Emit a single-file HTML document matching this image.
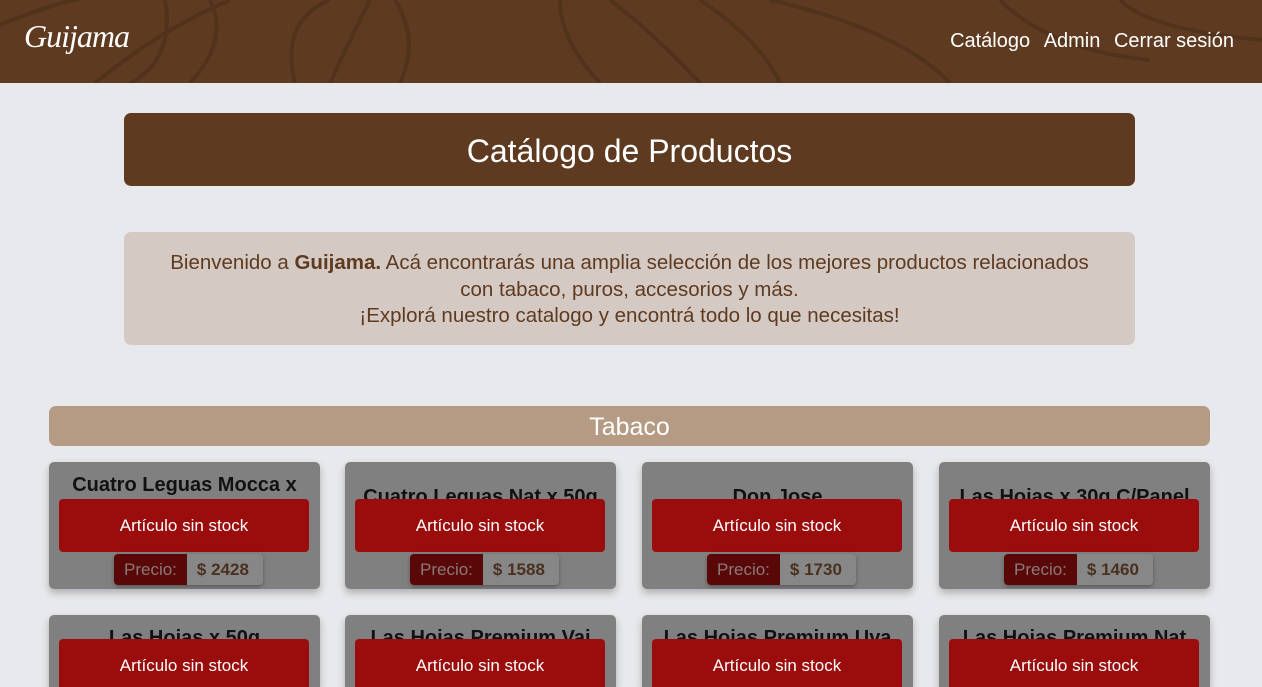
<!DOCTYPE html>
<html><head><meta charset="utf-8"><style>
*{margin:0;padding:0;box-sizing:border-box}
html,body{width:1262px;height:687px;overflow:hidden}
body{background:#e8e9ec;font-family:"Liberation Sans",sans-serif;position:relative}
.nav{position:absolute;left:0;top:0;width:1262px;height:83px;background:#5e3b20;overflow:hidden}
.logo{position:absolute;left:24px;top:18px;color:#fff;font-family:"Liberation Serif",serif;font-style:italic;font-size:32px;letter-spacing:-1px}
.links{position:absolute;right:28px;top:30px;color:#fff;font-size:20px}
.links span{margin-left:8px}
.title{position:absolute;left:124px;top:113px;width:1011px;height:73px;background:#5e3b20;border-radius:7px;color:#fff;font-size:32px;text-align:center;line-height:76px}
.welcome{position:absolute;left:124px;top:232px;width:1011px;height:113px;background:#d5c9c3;border-radius:7px;color:#5e3b20;font-size:20.5px;text-align:center;padding-top:18px;line-height:26.5px}
.cat{position:absolute;left:49px;top:406px;width:1161px;height:40px;background:#b59a84;border-radius:7px;color:#fff;font-size:25px;text-align:center;line-height:42px}
.card{position:absolute;width:271px;height:127px;background:#808080;border-radius:5px;box-shadow:0 4px 8px rgba(0,0,0,.25);overflow:hidden}
.card h3{font-size:20px;font-weight:bold;color:#111;text-align:center;margin-top:12px;white-space:nowrap}
.btn{position:absolute;left:10px;top:37px;width:250px;height:53px;background:#9b0c0c;border-radius:4px;color:#fff;font-size:17px;text-align:center;line-height:53px}
.price{position:absolute;top:92px;left:65px;height:31px;display:flex;font-size:17px;line-height:31px;border-radius:4px;overflow:hidden;box-shadow:0 2px 4px rgba(0,0,0,.3)}
.price a{background:#5a0707;color:#8a7a7a;padding:0 10px}
.price b{background:#878787;color:#4a3020;padding:0 14px 0 10px}
.r2{height:72px;border-radius:5px 5px 0 0}
</style></head><body>
<div class="nav">
<svg width="1262" height="83" style="position:absolute;left:0;top:0" fill="none" stroke="#51321b" stroke-width="4">
<path d="M0 25 Q60 0 100 -5"/><path d="M95 83 Q160 30 230 0"/><path d="M165 0 Q175 60 130 83"/><path d="M210 0 Q230 40 190 83"/><path d="M330 0 Q280 20 295 83"/><path d="M395 0 Q420 40 400 83"/><path d="M330 83 Q350 40 370 0"/><path d="M560 0 Q560 40 600 83"/><path d="M610 0 Q650 30 700 83"/><path d="M700 0 Q760 40 780 83"/><path d="M770 0 Q900 30 950 83"/><path d="M1000 0 Q1050 50 1150 60"/><path d="M1120 0 Q1150 30 1262 40"/>
</svg>
<div class="logo">Guijama</div>
<div class="links">Catálogo <span>Admin</span> <span>Cerrar sesión</span></div>
</div>
<div class="title">Catálogo de Productos</div>
<div class="welcome">Bienvenido a <b>Guijama.</b> Acá encontrarás una amplia selección de los mejores productos relacionados<br>con tabaco, puros, accesorios y más.<br>¡Explorá nuestro catalogo y encontrá todo lo que necesitas!</div>
<div class="cat">Tabaco</div>

<div class="card" style="left:49px;top:462px"><h3>Cuatro Leguas Mocca x</h3><div class="btn">Artículo sin stock</div><div class="price"><a>Precio:</a><b>$ 2428</b></div></div>
<div class="card" style="left:345px;top:462px"><h3 style="margin-top:24px">Cuatro Leguas Nat x 50g</h3><div class="btn">Artículo sin stock</div><div class="price"><a>Precio:</a><b>$ 1588</b></div></div>
<div class="card" style="left:642px;top:462px"><h3 style="margin-top:24px">Don Jose</h3><div class="btn">Artículo sin stock</div><div class="price"><a>Precio:</a><b>$ 1730</b></div></div>
<div class="card" style="left:939px;top:462px"><h3 style="margin-top:24px">Las Hojas x 30g C/Panel</h3><div class="btn">Artículo sin stock</div><div class="price"><a>Precio:</a><b>$ 1460</b></div></div>

<div class="card r2" style="left:49px;top:615px"><h3>Las Hojas x 50g</h3><div class="btn" style="top:24px">Artículo sin stock</div></div>
<div class="card r2" style="left:345px;top:615px"><h3>Las Hojas Premium Vai</h3><div class="btn" style="top:24px">Artículo sin stock</div></div>
<div class="card r2" style="left:642px;top:615px"><h3>Las Hojas Premium Uva</h3><div class="btn" style="top:24px">Artículo sin stock</div></div>
<div class="card r2" style="left:939px;top:615px"><h3>Las Hojas Premium Nat</h3><div class="btn" style="top:24px">Artículo sin stock</div></div>
</body></html>
